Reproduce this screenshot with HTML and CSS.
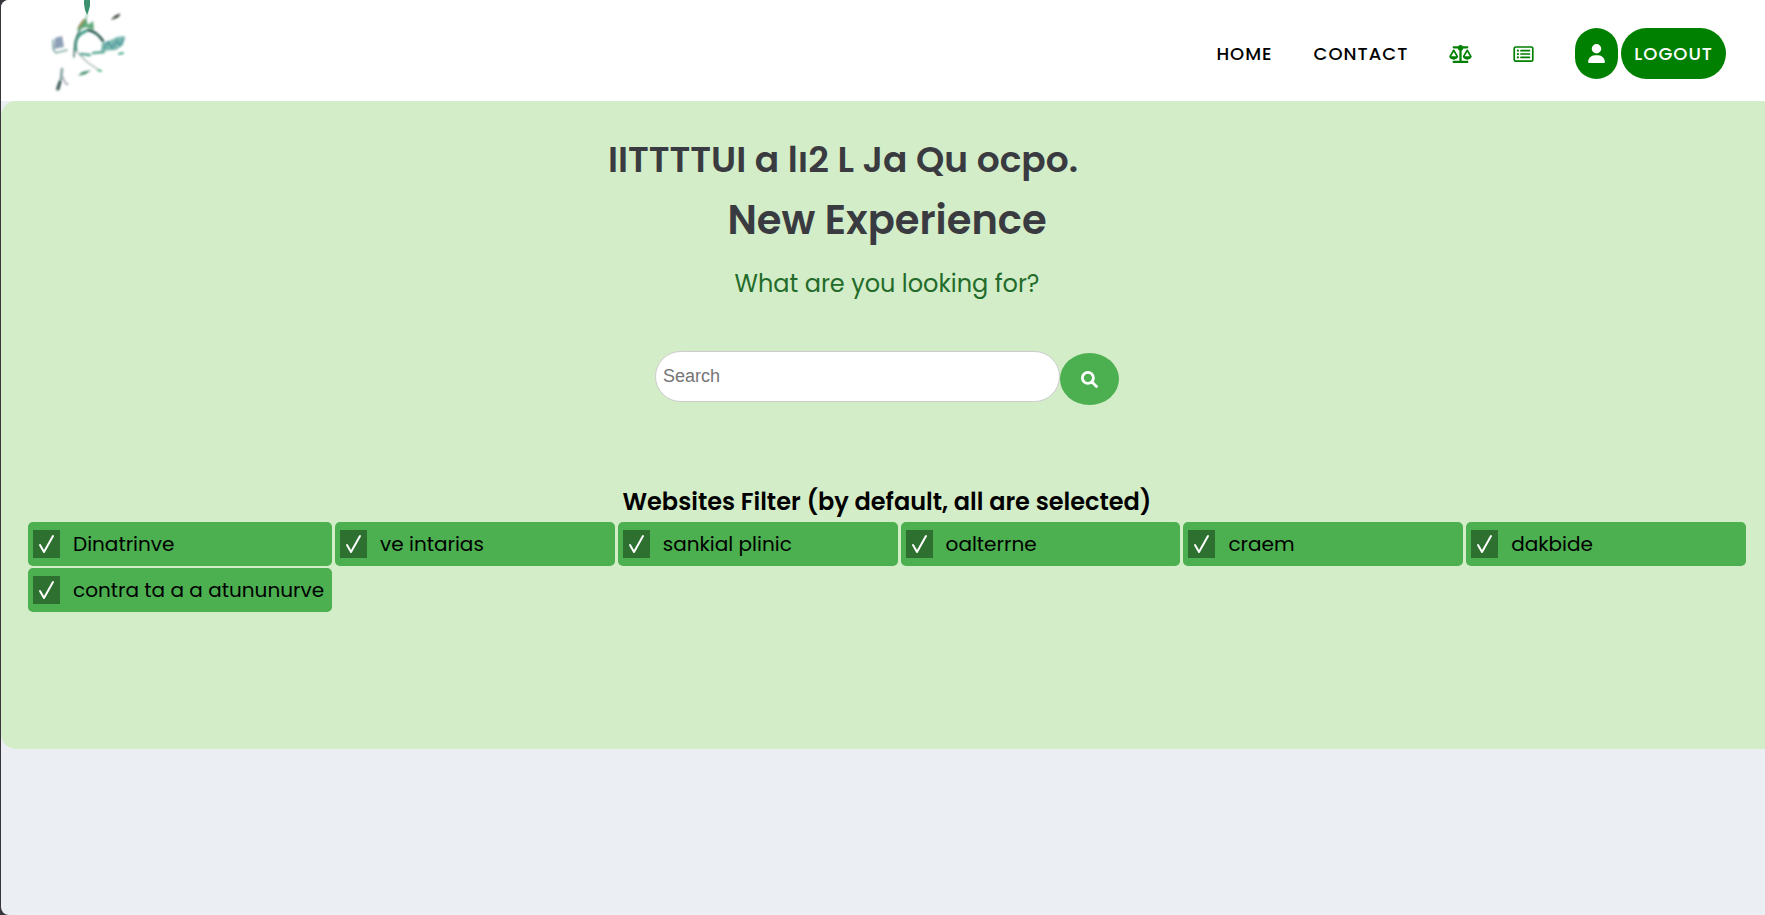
FILE: index.html
```html
<!DOCTYPE html>
<html lang="en">
<head>
<meta charset="utf-8">
<title>New Experience</title>
<link rel="stylesheet" href="styles.css">
</head>
<body>
<div class="page">
  <header class="header">
    <a class="brand" href="#" aria-label="Home page">
      <svg class="logo" viewBox="0 0 150 101" aria-hidden="true">
        <defs><filter id="soft"><feGaussianBlur stdDeviation="0.8"/></filter></defs>
        <path d="M83 0h6v6l-2 7-1 2-2-5-1-6z" fill="#3b9070"/>
        <g filter="url(#soft)" fill="none" stroke-linecap="round">
          <path d="M86 14l-1 6" stroke="#8cc8ac" stroke-width="1.5"/>
          <path d="M76 31c1-5 4-10 9-13l2 7 5-4 1 9-8-3z" fill="#5fa879"/>
          <path d="M78 27l5-7" stroke="#9b8b50" stroke-width="2"/>
          <path d="M75 50c-2-9 2-16 10-19" stroke="#46a18b" stroke-width="3"/>
          <path d="M87 30c6 1 11 5 15 11" stroke="#24564b" stroke-width="2.5"/>
          <path d="M79 30c-4 6-6 13-6 27" stroke="#47766d" stroke-width="1.5"/>
          <path d="M75 51l11 11 13 9" stroke="#a6b8b0" stroke-width="1.5"/>
          <path d="M97 70l3 1" stroke="#5cb784" stroke-width="2"/>
          <path d="M80 54l9 1M92 53l11-1" stroke="#5fa896" stroke-width="2.5"/>
          <path d="M101 43l9-3 6-3 8-1-2 9-7 5-15 1z" fill="#7dbab0"/>
          <path d="M103 49l4-7 4 6 5-7 3 4 4-6" stroke="#4a96a0" stroke-width="1.5"/>
          <path d="M118 54l4-1" stroke="#4bac93" stroke-width="2"/>
          <path d="M54 38l7-2 2 11-10 2z" fill="#8ea0b8"/>
          <path d="M52 40v9l3 4 11-3" stroke="#7ca79f" stroke-width="1.5"/>
          <path d="M111 19l3-3 5-2-2 3z" fill="#444d43" stroke="#444d43"/>
          <path d="M77 76l4-4 9-2-5 4z" fill="#4c9272"/>
          <path d="M61 69l-1 10-4 10" stroke="#7d9f9b" stroke-width="2.5"/>
          <path d="M59 82l-2 7" stroke="#3c5756" stroke-width="3"/>
          <path d="M61 76l4 8h2" stroke="#9a9fae" stroke-width="1.5"/>
        </g>
      </svg>
    </a>
    <nav class="nav" aria-label="Main">
      <a class="nav-link" href="#">HOME</a>
      <a class="nav-link" href="#">CONTACT</a>
      <a class="nav-icon" href="#" aria-label="Compare">
        <svg class="icon-scale" viewBox="0 0 640 512" aria-hidden="true"><path fill="currentColor" d="M384 32H512c18 0 32 14 32 32s-14 32-32 32H398c-5 26-23 47-46 57V448H512c18 0 32 14 32 32s-14 32-32 32H128c-18 0-32-14-32-32s14-32 32-32H288V153c-23-10-41-31-46-57H128c-18 0-32-14-32-32s14-32 32-32H256c15-19 38-32 64-32s49 13 64 32zM584 320L512 196 440 320zM512 416c-63 0-115-34-126-79-3-11 1-22 7-32l95-162c5-9 14-14 24-14s19 5 24 14l95 162c6 10 10 21 7 32-11 45-63 79-126 79zM127 196L54 320H200zM1 337c-3-11 1-22 7-32l95-162c5-9 14-14 24-14s19 5 24 14l95 162c6 10 10 21 7 32-11 45-63 79-126 79S12 382 1 337z"/></svg>
      </a>
      <a class="nav-icon" href="#" aria-label="List">
        <svg class="icon-list" viewBox="0 0 576 512" aria-hidden="true"><path fill="currentColor" fill-rule="evenodd" d="M64 32H512a64 64 0 0 1 64 64V416a64 64 0 0 1-64 64H64A64 64 0 0 1 0 416V96A64 64 0 0 1 64 32zM64 80a16 16 0 0 0-16 16V416a16 16 0 0 0 16 16H512a16 16 0 0 0 16-16V96a16 16 0 0 0-16-16zM96 160a32 32 0 1 1 64 0 32 32 0 1 1-64 0zM96 256a32 32 0 1 1 64 0 32 32 0 1 1-64 0zM96 352a32 32 0 1 1 64 0 32 32 0 1 1-64 0zM216 136H456a24 24 0 0 1 0 48H216a24 24 0 0 1 0-48zM216 232H456a24 24 0 0 1 0 48H216a24 24 0 0 1 0-48zM216 328H456a24 24 0 0 1 0 48H216a24 24 0 0 1 0-48z"/></svg>
      </a>
      <div class="account">
        <a class="pill pill-user" href="#" aria-label="Account">
          <svg class="icon-user" viewBox="0 0 448 512" aria-hidden="true"><path fill="currentColor" d="M224 256a128 128 0 1 0 0-256 128 128 0 1 0 0 256zM178 304C80 304 0 384 0 482c0 17 13 30 30 30H418c17 0 30-13 30-30 0-98-80-178-178-178z"/></svg>
        </a>
        <button class="pill" type="button">LOGOUT</button>
      </div>
    </nav>
  </header>
  <main class="hero">
    <h1 class="title"><span class="title-top">IITTTTUI a lı2 L Ja Qu ocpo.</span><span>New Experience</span></h1>
    <p class="subtitle">What are you looking for?</p>
    <form class="search">
      <input class="search-input" type="text" placeholder="Search" aria-label="Search">
      <button class="search-button" type="button" aria-label="Submit search">
        <svg class="icon-search" viewBox="0 0 512 512" aria-hidden="true"><path fill="none" stroke="currentColor" stroke-width="84" stroke-linecap="round" d="M208 42a166 166 0 1 0 0 332 166 166 0 1 0 0-332zM330 330L466 466"/></svg>
      </button>
    </form>
    <h2 class="filter-title">Websites Filter (by default, all are selected)</h2>
    <div class="filters">
      <label class="filter"><input class="check" type="checkbox" checked><span>Dinatrinve</span></label>
      <label class="filter"><input class="check" type="checkbox" checked><span>ve intarias</span></label>
      <label class="filter"><input class="check" type="checkbox" checked><span>sankial plinic</span></label>
      <label class="filter"><input class="check" type="checkbox" checked><span>oalterrne</span></label>
      <label class="filter"><input class="check" type="checkbox" checked><span>craem</span></label>
      <label class="filter"><input class="check" type="checkbox" checked><span>dakbide</span></label>
      <label class="filter"><input class="check" type="checkbox" checked><span>contra ta a a atununurve</span></label>
    </div>
  </main>
</div>
</body>
</html>
```
FILE: styles.css
```css
* { box-sizing: border-box; }

body {
  margin: 0;
  background: #38363b;
  color: #000;
  font-family: Poppins, Inter, sans-serif;
}

.page {
  min-height: 100vh;
  margin-left: 1px;
  overflow: hidden;
  border-radius: 8px 0 0 8px;
  background: #ebeff3;
}

.header {
  display: flex;
  align-items: center;
  justify-content: space-between;
  padding-right: 39px;
  background: #fff;
}

.brand, .logo { display: block; }
.logo { width: 150px; height: 101px; }

.nav {
  display: flex;
  align-items: center;
  gap: 41px;
  padding-top: 6px;
  font-size: 18px;
  font-weight: 500;
  letter-spacing: 1px;
}

.nav-link { color: #000; text-decoration: none; }
.nav-icon { display: flex; color: green; }
.icon-scale { width: 23px; height: 18px; }
.icon-list { width: 21px; height: 18px; }
.account { display: flex; gap: 3px; }

.pill {
  display: flex;
  align-items: center;
  height: 51px;
  padding: 0 13px;
  border: 0;
  border-radius: 26px;
  background: green;
  color: #fff;
  font: inherit;
  letter-spacing: inherit;
}

.pill-user { border-radius: 22px; }
.icon-user { width: 17px; height: 19px; }

.hero {
  padding: 29px 19px 137px 27px;
  border-radius: 15px 0 0 15px;
  background: #d3edc8;
}

.title {
  display: flex;
  flex-direction: column;
  margin: 0;
  color: #3a3b40;
  font-size: 40px;
  font-weight: 600;
  line-height: 60px;
  text-align: center;
}

.title-top {
  padding-right: 88px;
  font-size: 36px;
}

.subtitle {
  margin: 16px 0 0;
  color: #236b2a;
  font-size: 24px;
  line-height: 36px;
  text-align: center;
}

.search {
  display: flex;
  justify-content: center;
  margin-top: 49px;
}

.search-input {
  width: 405px;
  height: 51px;
  padding: 0 7px;
  border: 1px solid #ccc;
  border-radius: 26px;
  background: #fff;
  font-family: "Liberation Sans", Arial, sans-serif;
  font-size: 18px;
}

.search-input::placeholder { color: #757575; }

.search-button {
  display: flex;
  align-items: center;
  justify-content: center;
  width: 59px;
  height: 52px;
  margin-top: 2px;
  padding: 0;
  border: 0;
  border-radius: 50%;
  background: #4caf50;
  color: #fff;
}

.icon-search { width: 17px; height: 17px; }

.filter-title {
  margin: 77px 0 0;
  font-size: 24px;
  font-weight: 600;
  line-height: 40px;
  text-align: center;
}

.filters {
  display: grid;
  grid-template-columns: 304px repeat(5, 1fr);
  gap: 2px 3px;
}

.filter {
  display: flex;
  align-items: center;
  gap: 13px;
  height: 44px;
  padding: 0 5px;
  border-radius: 5px;
  background: #4caf50;
  font-size: 20px;
  white-space: nowrap;
}

.check {
  width: 27px;
  height: 28px;
  margin: 0;
  appearance: none;
  background: #2d702f;
}

.check:checked {
  background-image: url("data:image/svg+xml,%3Csvg xmlns='http://www.w3.org/2000/svg' viewBox='0 0 27 28'%3E%3Cpath d='M7 15l4 7L20 6' fill='none' stroke='white' stroke-width='2' stroke-linecap='round' stroke-linejoin='round'/%3E%3C/svg%3E");
}
```
